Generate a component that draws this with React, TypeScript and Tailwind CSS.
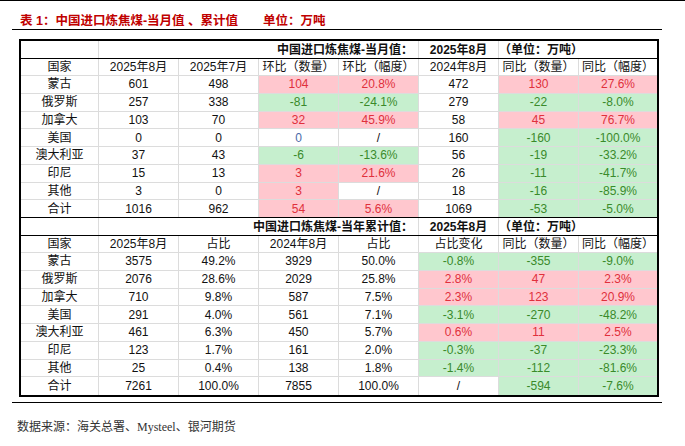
import React from 'react';

type Tone = 'r' | 'g' | 'b' | '';

interface Cell {
  v: string;
  t?: Tone;
}

interface Block {
  label: string;
  header: string[];
  rows: Cell[][];
}

const c = (v: string, t: Tone = ''): Cell => ({ v, t });

const monthly: Block = {
  label: '中国进口炼焦煤-当月值：',
  header: ['国家', '2025年8月', '2025年7月', '环比（数量）', '环比（幅度）', '2024年8月', '同比（数量）', '同比（幅度）'],
  rows: [
    [c('蒙古'), c('601'), c('498'), c('104', 'r'), c('20.8%', 'r'), c('472'), c('130', 'r'), c('27.6%', 'r')],
    [c('俄罗斯'), c('257'), c('338'), c('-81', 'g'), c('-24.1%', 'g'), c('279'), c('-22', 'g'), c('-8.0%', 'g')],
    [c('加拿大'), c('103'), c('70'), c('32', 'r'), c('45.9%', 'r'), c('58'), c('45', 'r'), c('76.7%', 'r')],
    [c('美国'), c('0'), c('0'), c('0', 'b'), c('/'), c('160'), c('-160', 'g'), c('-100.0%', 'g')],
    [c('澳大利亚'), c('37'), c('43'), c('-6', 'g'), c('-13.6%', 'g'), c('56'), c('-19', 'g'), c('-33.2%', 'g')],
    [c('印尼'), c('15'), c('13'), c('3', 'r'), c('21.6%', 'r'), c('26'), c('-11', 'g'), c('-41.7%', 'g')],
    [c('其他'), c('3'), c('0'), c('3', 'r'), c('/'), c('18'), c('-16', 'g'), c('-85.9%', 'g')],
    [c('合计'), c('1016'), c('962'), c('54', 'r'), c('5.6%', 'r'), c('1069'), c('-53', 'g'), c('-5.0%', 'g')],
  ],
};

const yearly: Block = {
  label: '中国进口炼焦煤-当年累计值：',
  header: ['国家', '2025年8月', '占比', '2024年8月', '占比', '占比变化', '同比（数量）', '同比（幅度）'],
  rows: [
    [c('蒙古'), c('3575'), c('49.2%'), c('3929'), c('50.0%'), c('-0.8%', 'g'), c('-355', 'g'), c('-9.0%', 'g')],
    [c('俄罗斯'), c('2076'), c('28.6%'), c('2029'), c('25.8%'), c('2.8%', 'r'), c('47', 'r'), c('2.3%', 'r')],
    [c('加拿大'), c('710'), c('9.8%'), c('587'), c('7.5%'), c('2.3%', 'r'), c('123', 'r'), c('20.9%', 'r')],
    [c('美国'), c('291'), c('4.0%'), c('561'), c('7.1%'), c('-3.1%', 'g'), c('-270', 'g'), c('-48.2%', 'g')],
    [c('澳大利亚'), c('461'), c('6.3%'), c('450'), c('5.7%'), c('0.6%', 'r'), c('11', 'r'), c('2.5%', 'r')],
    [c('印尼'), c('123'), c('1.7%'), c('161'), c('2.0%'), c('-0.3%', 'g'), c('-37', 'g'), c('-23.3%', 'g')],
    [c('其他'), c('25'), c('0.4%'), c('138'), c('1.8%'), c('-1.4%', 'g'), c('-112', 'g'), c('-81.6%', 'g')],
    [c('合计'), c('7261'), c('100.0%'), c('7855'), c('100.0%'), c('/'), c('-594', 'g'), c('-7.6%', 'g')],
  ],
};

const toneClass: Record<Tone, string> = {
  r: 'bg-[#ffc7ce] text-[#e0303c]',
  g: 'bg-[#c6efce] text-[#3a8a2a]',
  b: 'text-[#4a6aa8]',
  '': 'text-[#111]',
};

const cols = 'grid grid-cols-[78px_repeat(6,80px)_78px]';

const TableBlock: React.FC<{ block: Block; last?: boolean }> = ({ block, last }) => (
  <>
    <div className={`${cols} h-[18px] border-b border-black font-bold text-[12px] text-[#111]`}>
      <div className="border-r border-[#dcdcdc]" />
      <div className="col-span-4 border-r border-[#dcdcdc] flex items-center justify-end pr-[5px] leading-none">
        {block.label}
      </div>
      <div className="border-r border-[#dcdcdc] flex items-center justify-center leading-none">2025年8月</div>
      <div className="col-span-2 flex items-center leading-none">（单位：万吨）</div>
    </div>
    <div className={`${cols} h-[17px] border-b border-[#dcdcdc] text-[12px] text-[#111]`}>
      {block.header.map((h, i) => (
        <div
          key={i}
          className={`flex items-center justify-center leading-none ${i < 7 ? 'border-r border-[#dcdcdc]' : ''}`}
        >
          {h}
        </div>
      ))}
    </div>
    {block.rows.map((row, ri) => {
      const isLast = ri === block.rows.length - 1;
      return (
        <div
          key={ri}
          className={`${cols} h-[17.75px] text-[12px] ${
            isLast ? (last ? '' : 'border-b border-black') : 'border-b border-[#dcdcdc]'
          }`}
        >
          {row.map((cell, ci) => (
            <div
              key={ci}
              className={`flex items-center justify-center leading-none ${toneClass[cell.t ?? '']} ${
                ci < 7 ? 'border-r border-[#dcdcdc]' : ''
              }`}
            >
              {cell.v}
            </div>
          ))}
        </div>
      );
    })}
  </>
);

export default function App() {
  return (
    <div className="w-[685px] h-[446px] bg-white border-t border-black font-['Liberation_Sans','Noto_Sans_CJK_SC',sans-serif]">
      <div className="mx-[12px] w-[650px] h-[29px] border-b border-black flex items-end pb-[2px] pl-[8px] text-[12.5px] font-bold text-[#c00000] leading-none">
        <span>表 1：中国进口炼焦煤-当月值 、累计值</span>
        <span className="ml-[25px]">单位：万吨</span>
      </div>
      <div className="ml-[19px] mt-[9px] w-[640px] border-2 border-black">
        <TableBlock block={monthly} />
        <TableBlock block={yearly} last />
      </div>
      <div className="mx-[12px] mt-[5px] w-[650px] border-b border-black" />
      <div className="pl-[17px] pt-[18px] text-[12px] text-[#333] leading-none font-['Liberation_Serif','Noto_Sans_CJK_SC',serif]">
        数据来源：海关总署、Mysteel、银河期货
      </div>
    </div>
  );
}
